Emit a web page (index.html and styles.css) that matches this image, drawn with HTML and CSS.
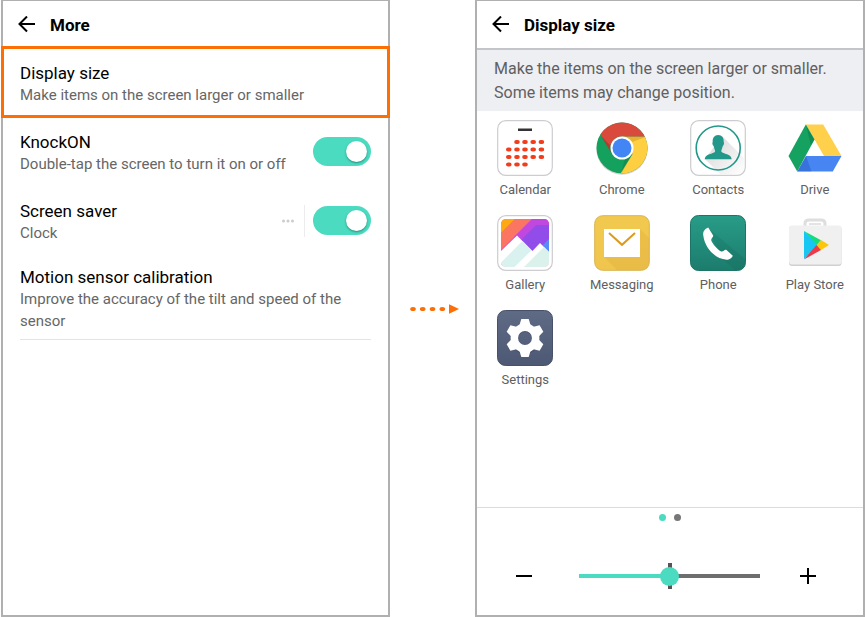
FILE: index.html
```html
<!DOCTYPE html>
<html lang="en">
<head>
<meta charset="utf-8">
<meta name="viewport" content="width=device-width, initial-scale=1">
<title>Display size</title>
<link rel="stylesheet" href="styles.css">
</head>
<body>
<main class="steps">
  <section class="screen">
    <header class="bar">
      <button class="back" type="button" aria-label="Back">
        <svg width="18" height="18" viewBox="0 0 18 18"><path d="M17 8H1.500M9 .5L1.500 8L9 15.500"/></svg>
      </button>
      <h1 class="title">More</h1>
    </header>
    <ul class="options">
      <li class="option highlighted">
        <a class="text" href="#display-size"><span class="name">Display size</span><span class="hint">Make items on the screen larger or smaller</span></a>
      </li>
      <li class="option">
        <label class="text" for="knock"><span class="name">KnockON</span><span class="hint">Double-tap the screen to turn it on or off</span></label>
        <input class="switch" id="knock" type="checkbox" role="switch" checked>
      </li>
      <li class="option">
        <label class="text" for="saver"><span class="name">Screen saver</span><span class="hint">Clock</span></label>
        <button class="more" type="button" aria-label="Screen saver options">
          <svg width="14" height="4" viewBox="0 0 14 4"><circle cx="2.500" cy="2" r="1.500"/><circle cx="7" cy="2" r="1.500"/><circle cx="11.500" cy="2" r="1.500"/></svg>
        </button>
        <input class="switch" id="saver" type="checkbox" role="switch" checked>
      </li>
      <li class="option last">
        <a class="text" href="#motion"><span class="name">Motion sensor calibration</span><span class="hint">Improve the accuracy of the tilt and speed of the sensor</span></a>
      </li>
    </ul>
  </section>

  <div class="next">
    <svg width="50" height="12" viewBox="0 0 50 12" fill="#fb6f05" aria-hidden="true"><ellipse cx="3" cy="6" rx="2.800" ry="2.100"/><ellipse cx="12.700" cy="6" rx="2.800" ry="2.100"/><ellipse cx="22.500" cy="6" rx="2.800" ry="2.100"/><ellipse cx="32.300" cy="6" rx="2.800" ry="2.100"/><path d="M39 1.200L49 6L39 10.800z"/></svg>
  </div>

  <section class="screen" id="display-size">
    <header class="bar ruled">
      <button class="back" type="button" aria-label="Back">
        <svg width="18" height="18" viewBox="0 0 18 18"><path d="M17 8H1.500M9 .5L1.500 8L9 15.500"/></svg>
      </button>
      <h2 class="title">Display size</h2>
    </header>
    <p class="info">Make the items on the screen larger or smaller. Some items may change position.</p>
    <ul class="apps">
      <li class="app">
        <svg viewBox="0 0 56 56"><rect x=".7" y=".7" width="54.600" height="54.600" rx="8" fill="#fff" stroke="#cdcdd1" stroke-width="1.200"/><rect x="21" y="8.500" width="14" height="2.500" fill="#333"/>
          <path d="M19.300 22h1.400M27.300 22h1.400M35.500 22h1.400M43.700 22h1.400M11.100 29.500h1.400M19.300 29.500h1.400M27.300 29.500h1.400M35.500 29.500h1.400M43.700 29.500h1.400M11.100 37h1.400M19.300 37h1.400M27.300 37h1.400M35.500 37h1.400M43.700 37h1.400M11.100 44.500h1.400M19.300 44.500h1.400M27.300 44.500h1.400" stroke="#f23d1d" stroke-width="4.200" stroke-linecap="round"/></svg>
        <span>Calendar</span>
      </li>
      <li class="app">
        <svg viewBox="0 0 56 56"><defs><clipPath id="disc"><circle cx="28" cy="28" r="25.500"/></clipPath></defs><circle cx="28" cy="29" r="25.700" fill="#d5d5d5"/>
          <g clip-path="url(#disc)"><path d="M0 0h56v56H0z" fill="#14a05d"/><path d="M28 16.500H56V56H25L38.500 34z" fill="#ffcf42"/><path d="M0 10V0h56v16.500H28A11.500 11.500 0 0 0 17.500 33.500L4 10z" fill="#d94a3d"/><path d="M28 16.500H53L38 22z" fill="#b77b12" opacity=".35"/><path d="M7 16L18 34L16 25z" fill="#6b2519" opacity=".35"/><path d="M38.500 34L27 54L31 38z" fill="#0b6036" opacity=".25"/></g>
          <circle cx="28" cy="28" r="11.500" fill="#fff"/><circle cx="28" cy="28" r="9.500" fill="#4285f4"/></svg>
        <span>Chrome</span>
      </li>
      <li class="app">
        <svg viewBox="0 0 56 56"><defs><linearGradient id="cast" x1="0" y1="0" x2="1" y2="1"><stop offset=".25" stop-color="#dedede"/><stop offset=".9" stop-color="#fbfbfb"/></linearGradient></defs><rect x=".7" y=".7" width="54.600" height="54.600" rx="8" fill="#fff" stroke="#cdcdd1" stroke-width="1.200"/><path d="M32 16L54 38V47Q54 54 47 54H30L15 39z" fill="url(#cast)"/><circle cx="28.200" cy="28" r="22" fill="none" stroke="#22988a" stroke-width="1.600"/><path d="M28.200 15C32 15 34 18 33.700 22C34.500 23 33.700 25.500 32.800 26C32.200 29 31.300 29.500 31.300 31.500C33 34.300 41.500 33.500 41.700 39.300H14.700C14.900 33.500 23.400 34.300 25.100 31.500C25.100 29.500 24.200 29 23.600 26C22.700 25.500 21.900 23 22.700 22C22.400 18 24.400 15 28.200 15z" fill="#22988a"/></svg>
        <span>Contacts</span>
      </li>
      <li class="app">
        <svg viewBox="0 0 56 56"><path d="M18.800 4.500H36.200L54.500 36H37z" fill="#ffd04b"/><path d="M18.800 4.500L27.500 19.500L10.200 51.500L1.500 36z" fill="#15a260"/><path d="M19 36H54.500L45.800 51.500H10.200z" fill="#4685f2"/><path d="M18.800 4.500L27.500 19.500L24 25.500z" fill="#075e34" opacity=".3"/><path d="M19 36L24.500 51.500H10.200z" fill="#1a4aa4" opacity=".3"/></svg>
        <span>Drive</span>
      </li>
      <li class="app">
        <svg viewBox="0 0 56 56"><defs><clipPath id="photo"><rect x="4" y="4" width="48" height="48" rx="5"/></clipPath></defs><rect x=".7" y=".7" width="54.600" height="54.600" rx="8" fill="#fff" stroke="#cdcdd1" stroke-width="1.200"/>
          <g clip-path="url(#photo)"><path d="M4 4H52V52H4z" fill="#fc6d78"/><path d="M4 4H18L4 18z" fill="#fea814"/><path d="M18 4H35L4 35V18z" fill="#fb7660"/><path d="M35 4H52L4 52V35z" fill="#e84fb2"/><path d="M35 4H52V13L25 38L17 22z" fill="#c148df"/><path d="M52 10V27L36 43L22 27L39 10z" fill="#924ce9"/><path d="M52 24V38H38z" fill="#598af7"/><path d="M4 36L20 20.500L35.500 36L43 28L52 37V52H4z" fill="#fff"/><path d="M25.500 26L34.500 35.200L17.500 52H4V47.500z" fill="#d9f1ef"/><path d="M47 32L52 37V52H27z" fill="#dbf1ec"/></g></svg>
        <span>Gallery</span>
      </li>
      <li class="app">
        <svg viewBox="0 0 56 56"><defs><linearGradient id="gold" x2="0" y2="1"><stop stop-color="#f2c94f"/><stop offset="1" stop-color="#f0c54e"/></linearGradient></defs><rect x=".7" y=".7" width="54.600" height="54.600" rx="8" fill="url(#gold)" stroke="#d9b452" stroke-width="1"/><path d="M46 14L55 23V47Q55 55 47 55H23L10 42z" fill="#dbaa39" opacity=".3"/><path d="M10 14H46V42H10z" fill="#fff"/><path d="M15 18L28 29.800L41 18" fill="none" stroke="#db9b1c" stroke-width="2"/></svg>
        <span>Messaging</span>
      </li>
      <li class="app">
        <svg viewBox="0 0 56 56"><defs><linearGradient id="teal" x2="0" y2="1"><stop stop-color="#289c88"/><stop offset="1" stop-color="#1c7c6c"/></linearGradient></defs><rect x=".5" y=".5" width="55" height="55" rx="8" fill="url(#teal)" stroke="#1d7567" stroke-width="1"/><path d="M19 14L55 44V47Q55 55 47 55H45L30 42z" fill="#126658" opacity=".22"/><path d="M18.200 12.500C15.500 13.500 12.800 16 13.200 20C14.500 32 24 43.500 36.500 44.800C40 45 42.500 42 42.800 40.800L36.200 34.800C34 34.500 33.500 37 31.200 36.500C27.500 34.500 22.500 29 21.200 25.200C21 23 23.500 22.500 23.200 20.500z" fill="#fff"/></svg>
        <span>Phone</span>
      </li>
      <li class="app">
        <svg viewBox="0 0 56 56"><path d="M18 12V8.500Q18 5 22 5H34Q38 5 38 8.500V12" fill="none" stroke="#dedede" stroke-width="3"/><path d="M22 9H34" stroke="#c8c8c8"/><rect x="2" y="11" width="52.500" height="40" rx="3" fill="#d0d0d0"/><rect x="2" y="10.500" width="52.500" height="39" rx="3" fill="#f0f0f0"/><path d="M17 16L32 30.500L17 44z" fill="#18c6f4"/><path d="M17 16L34 25.200L30 30z" fill="#14dc7b"/><path d="M34 25L42 30L34 35L29.500 30z" fill="#fdc60d"/><path d="M29.500 30L34 35L17 44.500z" fill="#ef3949"/></svg>
        <span>Play Store</span>
      </li>
      <li class="app">
        <svg viewBox="0 0 56 56"><defs><linearGradient id="slate" x2="0" y2="1"><stop stop-color="#5f6a85"/><stop offset="1" stop-color="#4d5874"/></linearGradient></defs><rect x=".5" y=".5" width="55" height="55" rx="8" fill="url(#slate)" stroke="#485169"/>
          <circle cx="28" cy="29" r="11" fill="none" stroke="#3f485f" stroke-width="8" opacity=".5"/>
          <circle cx="28" cy="28" r="10.700" fill="none" stroke="#fff" stroke-width="7.500"/>
          <g fill="#fff"><path id="tooth" d="M22.500 15L24.300 9H31.700L33.500 15z"/><use href="#tooth" transform="rotate(60 28 28)"/><use href="#tooth" transform="rotate(120 28 28)"/><use href="#tooth" transform="rotate(180 28 28)"/><use href="#tooth" transform="rotate(240 28 28)"/><use href="#tooth" transform="rotate(300 28 28)"/></g></svg>
        <span>Settings</span>
      </li>
    </ul>
    <footer class="sizer">
      <div class="pages"><span class="page current"></span><span class="page"></span></div>
      <div class="scale">
        <button class="step" type="button" aria-label="Smaller"><svg width="16" height="16" viewBox="0 0 16 16"><path d="M0 8H16"/></svg></button>
        <div class="track"><input class="range" type="range" min="0" max="2" value="1" aria-label="Display size"></div>
        <button class="step" type="button" aria-label="Larger"><svg width="16" height="16" viewBox="0 0 16 16"><path d="M0 8H16M8 0V16"/></svg></button>
      </div>
    </footer>
  </section>
</main>
</body>
</html>
```
FILE: styles.css
```css
* { box-sizing: border-box; }

body {
  margin: 0;
  background: #fff;
  color: #000;
  font-family: Roboto, "Liberation Sans", sans-serif;
}

ul { list-style: none; margin: 0; padding: 0; }
h1, h2, p { margin: 0; }
button { border: 0; padding: 0; background: none; }
svg { display: block; }

.steps {
  display: grid;
  grid-template-columns: 389fr 85px 390fr;
  min-height: 100vh;
  padding-left: 1px;
}

.screen {
  display: flex;
  flex-direction: column;
  border: 2px solid #b0b0b0;
  border-top-width: 1px;
}

.bar {
  display: flex;
  align-items: center;
  gap: 14px;
  height: 47px;
  padding: 0 15px;
}
.bar.ruled {
  height: 49px;
  border-bottom: 2px solid #c3c5c9;
}
.back path { fill: none; stroke: #000; stroke-width: 2; }
.title { font-size: 17px; line-height: 24px; font-weight: 700; }

.options { margin-top: -2px; }
.option {
  display: flex;
  align-items: center;
  margin: 0 17px;
  padding-bottom: 25px;
}
.option.highlighted {
  margin: 0 -2px 13px;
  padding: 13px 16px 9px;
  border: 3px solid #fb6f05;
}
.option.last {
  margin-top: -3px;
  padding-bottom: 7px;
  border-bottom: 1px solid #e4e4e4;
}
.text { flex: 1; color: inherit; text-decoration: none; }
.name { display: block; font-size: 17px; line-height: 22px; }
.hint { display: block; font-size: 15px; line-height: 22px; color: #666; }

.switch {
  appearance: none;
  width: 58px;
  height: 29px;
  margin: 0 0 3px;
  padding: 4px;
  border-radius: 15px;
  background: #ccc;
}
.switch::before {
  content: "";
  display: block;
  width: 21px;
  height: 21px;
  border-radius: 50%;
  background: #fff;
  box-shadow: 0 1px 2px rgba(0, 60, 50, .5);
}
.switch:checked { background: #4adbc0; }
.switch:checked::before { margin-left: auto; }

.more {
  height: 32px;
  margin: 0 8px 2px 0;
  padding-right: 9px;
  border-right: 1px solid #ececec;
}
.more circle { fill: #ccc; }

.next {
  display: flex;
  align-items: center;
  justify-content: center;
  padding-left: 4px;
}

.info {
  padding: 7px 17px 6px;
  background: #eeeff3;
  color: #606060;
  font-size: 16px;
  line-height: 24px;
}

.apps {
  display: grid;
  grid-template-columns: repeat(4, 1fr);
  row-gap: 14px;
  padding-top: 9px;
}
.app {
  display: flex;
  flex-direction: column;
  align-items: center;
  gap: 3px;
  color: #606060;
  font-size: 13px;
  line-height: 22px;
}
.app svg { width: 56px; height: 56px; }

.sizer {
  height: 108px;
  margin-top: auto;
  padding-top: 6px;
  border-top: 1px solid #dcdcdc;
}
.pages { display: flex; justify-content: center; gap: 8px; }
.page { width: 7px; height: 7px; border-radius: 50%; background: #777; }
.page.current { background: #4adbc0; }

.scale {
  display: flex;
  align-items: center;
  margin-top: 39px;
  padding: 0 39px 0 31px;
}
.step { display: grid; place-items: center; width: 32px; height: 32px; }
.step path { stroke: #000; stroke-width: 2; }
.track {
  flex: 1;
  display: flex;
  margin: 0 32px 0 39px;
  background: linear-gradient(#555, #555) center / 4px 26px no-repeat;
}
.range {
  appearance: none;
  width: 100%;
  height: 28px;
  margin: 0;
  background: linear-gradient(90deg, #4adbc0 50%, #6e6e6e 50%) center / 100% 4px no-repeat;
}
.range::-webkit-slider-thumb {
  appearance: none;
  width: 19px;
  height: 19px;
  border-radius: 50%;
  background: #4adbc0;
}
```
